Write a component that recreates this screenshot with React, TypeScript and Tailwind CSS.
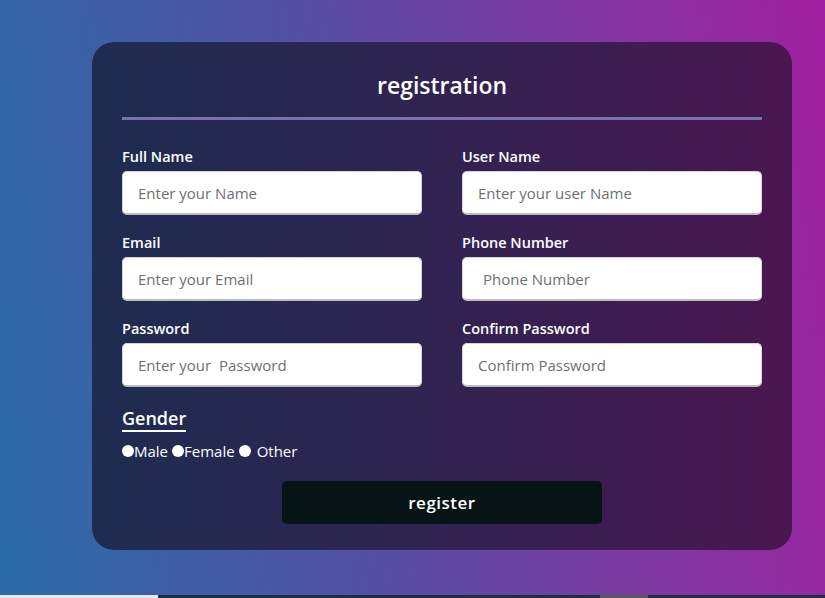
import React from "react";

const font = { fontFamily: '"Open Sans", "Noto Sans", sans-serif' };

function Field({ label, placeholder, indent }: { label: string; placeholder: string; indent?: boolean }) {
  return (
    <div className="flex flex-col">
      <label className="text-[14.5px] font-semibold text-white leading-[20px] mb-[4px]">{label}</label>
      <input
        placeholder={placeholder}
        className={`h-[44px] w-[300px] rounded-[5px] bg-white ${indent ? "pl-[20px]" : "pl-[15px]"} text-[15px] text-gray-800 placeholder:text-[#6f6f6f] outline-none border border-[#d5d5d5] border-b-[2px] border-b-[#bdbdbd]`}
      />
    </div>
  );
}

export default function App() {
  return (
    <div className="w-[825px] h-[598px] flex flex-col overflow-hidden" style={font}>
      <div className="flex-1 bg-[linear-gradient(82deg,#2a6caa_0%,#5150a2_40%,#7c3aa0_70%,#a01fa0_100%)] pt-[42px] pl-[92px]">
        <div className="w-[700px] h-[508px] rounded-[22px] bg-[linear-gradient(90deg,#1e2c50_0%,#2e2452_45%,#4a1650_100%)] px-[30px] pt-[26px]">
          <h1 className="text-center text-white text-[23px] font-semibold leading-[34px]">registration</h1>
          <div className="h-[3px] bg-[#7a70aa] mt-[15px] mb-[27px]" />
          <div className="grid grid-cols-[300px_300px] gap-x-[40px] gap-y-[18px]">
            <Field label="Full Name" placeholder="Enter your Name" />
            <Field label="User Name" placeholder="Enter your user Name" />
            <Field label="Email" placeholder="Enter your Email" />
            <Field label="Phone Number" placeholder="Phone Number" indent />
            <Field label="Password" placeholder="Enter your  Password" />
            <Field label="Confirm Password" placeholder="Confirm Password" />
          </div>
          <div className="mt-[19px]">
            <span className="inline-block text-white text-[18px] font-semibold leading-[24px] border-b-[2px] border-white">Gender</span>
          </div>
          <div className="flex items-center text-white text-[15px] mt-[9px] leading-[20px]">
            <input type="radio" name="g" className="appearance-none w-[12px] h-[12px] rounded-full bg-white m-0" />
            <span>Male</span>
            <input type="radio" name="g" className="appearance-none w-[12px] h-[12px] rounded-full bg-white ml-[4px]" />
            <span>Female</span>
            <input type="radio" name="g" className="appearance-none w-[12px] h-[12px] rounded-full bg-white ml-[4px]" />
            <span className="ml-[6px]">Other</span>
          </div>
          <div className="flex justify-center mt-[20px]">
            <button className="w-[320px] h-[43px] rounded-[5px] bg-[#071416] text-white text-[17px] font-semibold tracking-[0.5px]">register</button>
          </div>
        </div>
      </div>
      <div className="h-[3px] flex">
        <div className="w-[158px] bg-[#e8eaee]" />
        <div className="w-[442px] bg-[#1f2f3f]" />
        <div className="w-[48px] bg-[#555a60]" />
        <div className="flex-1 bg-[#1f2f3f]" />
      </div>
    </div>
  );
}
